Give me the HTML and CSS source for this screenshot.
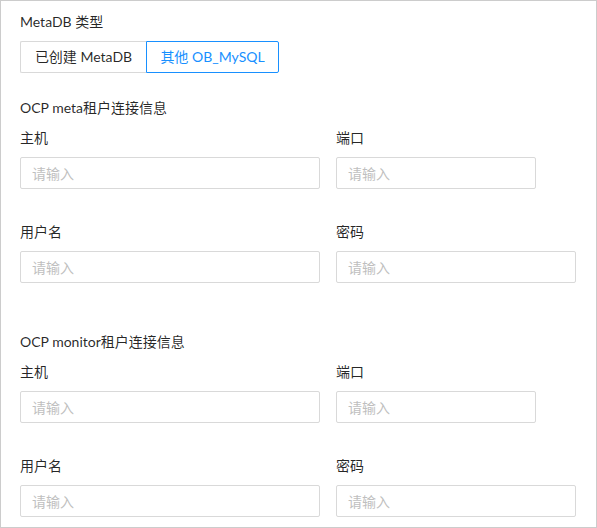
FILE: index.html
```html
<!DOCTYPE html>
<html lang="zh">
<head>
    <meta charset="UTF-8">
    <meta name="viewport" content="width=device-width, initial-scale=1.0">
    <title>MetaDB 配置</title>
    <link rel="stylesheet" href="styles.css">
</head>
<body>

    <div class="card">
        <!-- MetaDB 类型 -->
        <div class="form-item">
            <div class="label">MetaDB 类型</div>
            <div class="radio-group">
                <label class="radio-btn created">已创建 MetaDB</label>
                <label class="radio-btn other checked">其他 OB_MySQL</label>
            </div>
        </div>

        <!-- meta 租户 -->
        <div class="section">
            <div class="section-title">OCP meta租户连接信息</div>
            <div class="row">
                <div class="form-item">
                    <div class="label">主机</div>
                    <input class="input host" type="text" placeholder="请输入">
                </div>
                <div class="form-item">
                    <div class="label">端口</div>
                    <input class="input port" type="text" placeholder="请输入">
                </div>
            </div>
            <div class="row">
                <div class="form-item">
                    <div class="label">用户名</div>
                    <input class="input host" type="text" placeholder="请输入">
                </div>
                <div class="form-item">
                    <div class="label">密码</div>
                    <input class="input password" type="password" placeholder="请输入">
                </div>
            </div>
        </div>

        <!-- monitor 租户 -->
        <div class="section">
            <div class="section-title">OCP monitor租户连接信息</div>
            <div class="row">
                <div class="form-item">
                    <div class="label">主机</div>
                    <input class="input host" type="text" placeholder="请输入">
                </div>
                <div class="form-item">
                    <div class="label">端口</div>
                    <input class="input port" type="text" placeholder="请输入">
                </div>
            </div>
            <div class="row">
                <div class="form-item">
                    <div class="label">用户名</div>
                    <input class="input host" type="text" placeholder="请输入">
                </div>
                <div class="form-item">
                    <div class="label">密码</div>
                    <input class="input password" type="password" placeholder="请输入">
                </div>
            </div>
        </div>
    </div>

</body>
</html>
```

FILE: styles.css
```css
* { box-sizing: border-box; }

body {
    margin: 0;
    font-family: Lato, "Noto Sans CJK SC", sans-serif;
    font-size: 14px;
    line-height: 22px;
    color: rgba(0, 0, 0, 0.85);
    background: white;
}

.card {
    width: 597px;
    height: 528px;
    border: 1px solid #cccccc;
    padding: 10px 19px 0;
    overflow: hidden;
}

.label {
    height: 30px;
    padding-bottom: 8px;
}

.form-item { margin-bottom: 24px; }

/* Boutons radio */
.radio-group { display: flex; }

.radio-btn {
    height: 32px;
    line-height: 30px;
    text-align: center;
    white-space: nowrap;
    border: 1px solid #d9d9d9;
    color: rgba(0, 0, 0, 0.85);
    cursor: pointer;
}

.radio-btn.created {
    width: 126px;
    border-radius: 2px 0 0 2px;
    border-right: none;
}

.radio-btn.other {
    width: 133px;
    border-radius: 0 2px 2px 0;
}

.radio-btn.checked {
    border-color: #1890ff;
    color: #1890ff;
}

/* Sections */
.section + .section { margin-top: 16px; }

.section-title {
    height: 22px;
    margin-bottom: 8px;
}

.row {
    display: flex;
    gap: 16px;
}

.row .form-item { margin-bottom: 32px; }
.section:last-child .row:last-child .form-item { margin-bottom: 0; }

.input {
    display: block;
    height: 32px;
    padding: 4px 11px;
    border: 1px solid #d9d9d9;
    border-radius: 2px;
    font-family: inherit;
    font-size: 14px;
    color: rgba(0, 0, 0, 0.85);
    outline: none;
}

.input::placeholder { color: #bfbfbf; }

.host { width: 300px; }
.port { width: 200px; }
.password { width: 240px; }
```
